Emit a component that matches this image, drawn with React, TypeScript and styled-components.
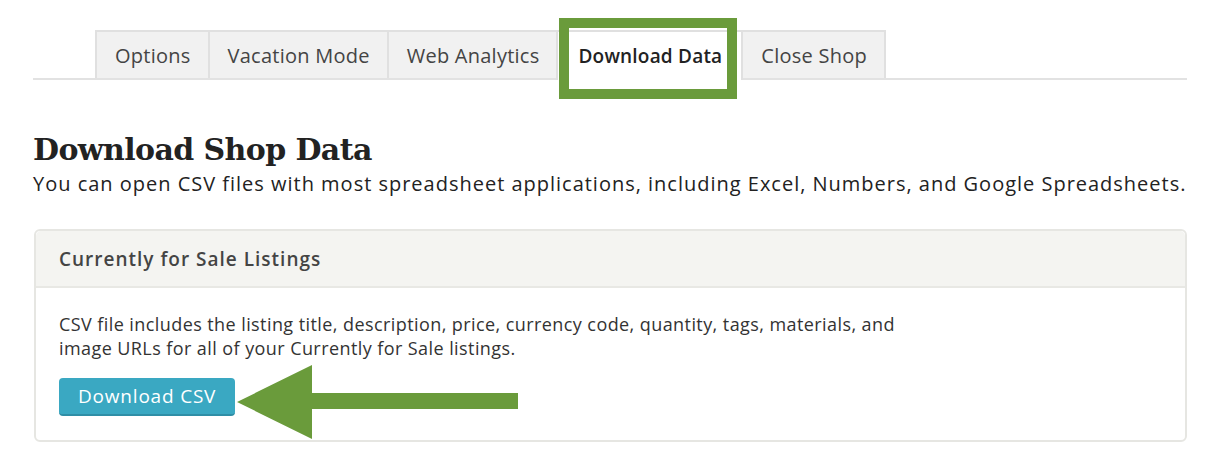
import React from "react";
import styled, { createGlobalStyle, css } from "styled-components";

const GlobalStyle = createGlobalStyle`
  html, body {
    margin: 0;
    padding: 0;
    background: #ffffff;
  }
  body {
    font-family: "Open Sans", "Noto Sans", Arial, sans-serif;
    color: #222222;
  }
`;

const Page = styled.div`
  width: 1154px;
  padding: 30px 0 0 33px;
`;

const TabBar = styled.nav`
  display: flex;
  padding-left: 62px;
  border-bottom: 2px solid #e2e2e2;
  height: 48px;
`;

const Tab = styled.div<{ $active?: boolean }>`
  position: relative;
  display: flex;
  align-items: center;
  padding: 0 17px 0 18px;
  height: 48px;
  box-sizing: border-box;
  background: #f1f1f1;
  border: 2px solid #e0e0e0;
  border-bottom: none;
  margin-left: -2px;
  font-size: 20px;
  letter-spacing: 0.25px;
  color: #444444;
  white-space: nowrap;
  &:first-child {
    margin-left: 0;
  }
  ${(p) =>
    p.$active &&
    css`
      background: #ffffff;
      height: 50px;
      padding: 0 19px 0 20px;
      font-size: 19px;
      font-weight: 600;
      letter-spacing: 0.2px;
      color: #222222;
      z-index: 1;
    `}
`;

const Highlight = styled.span`
  position: absolute;
  left: 1px;
  top: -14px;
  width: 178px;
  height: 81px;
  box-sizing: border-box;
  border: 10px solid #6a9b3b;
  pointer-events: none;
`;

const Heading = styled.h1`
  margin: 52px 0 0;
  font-family: "DejaVu Serif", serif;
  font-weight: 700;
  font-size: 30px;
  line-height: 36px;
  letter-spacing: -0.6px;
  color: #222222;
`;

const Lead = styled.p`
  margin: 2px 0 0;
  font-size: 20px;
  line-height: 28px;
  letter-spacing: 0.99px;
  white-space: nowrap;
  color: #222222;
`;

const Card = styled.section`
  margin-top: 31px;
  margin-left: 1px;
  border: 2px solid #e6e6e2;
  border-radius: 6px;
`;

const CardHeader = styled.header`
  height: 55px;
  display: flex;
  align-items: center;
  padding: 0 23px;
  background: #f4f4f1;
  border-bottom: 2px solid #e8e8e4;
  border-radius: 5px 5px 0 0;
  font-size: 19px;
  font-weight: 600;
  letter-spacing: 1px;
  color: #444444;
`;

const CardBody = styled.div`
  padding: 24px 23px 24px;
`;

const BodyText = styled.p`
  margin: 0;
  width: 870px;
  font-size: 18px;
  line-height: 24px;
  letter-spacing: 0.42px;
  color: #333333;
`;

const ActionRow = styled.div`
  position: relative;
  display: flex;
  margin-top: 18px;
`;

const Button = styled.button`
  height: 38px;
  padding: 0 19px;
  border: none;
  border-bottom: 2px solid #2f8ea6;
  border-radius: 4px;
  background: #3aa8c2;
  color: #ffffff;
  font-family: "Open Sans", "Noto Sans", Arial, sans-serif;
  font-size: 19px;
  letter-spacing: 0.8px;
  cursor: pointer;
`;

const Pointer = styled.svg`
  position: absolute;
  left: 178px;
  top: -13px;
  width: 281px;
  height: 74px;
  pointer-events: none;
`;

const tabs = ["Options", "Vacation Mode", "Web Analytics", "Download Data", "Close Shop"];

export default function App() {
  return (
    <>
      <GlobalStyle />
      <Page>
        <TabBar>
          {tabs.map((t) => (
            <Tab key={t} $active={t === "Download Data"}>
              {t}
              {t === "Download Data" && <Highlight />}
            </Tab>
          ))}
        </TabBar>
        <Heading>Download Shop Data</Heading>
        <Lead>
          You can open CSV files with most spreadsheet applications, including Excel, Numbers, and Google Spreadsheets.
        </Lead>
        <Card>
          <CardHeader>Currently for Sale Listings</CardHeader>
          <CardBody>
            <BodyText>
              CSV file includes the listing title, description, price, currency code, quantity, tags, materials, and
              image URLs for all of your Currently for Sale listings.
            </BodyText>
            <ActionRow>
              <Button>Download CSV</Button>
              <Pointer viewBox="0 0 281 74">
                <polygon points="0,37 75,0 75,28 281,28 281,44 75,44 75,74" fill="#6a9b3b" />
              </Pointer>
            </ActionRow>
          </CardBody>
        </Card>
      </Page>
    </>
  );
}
